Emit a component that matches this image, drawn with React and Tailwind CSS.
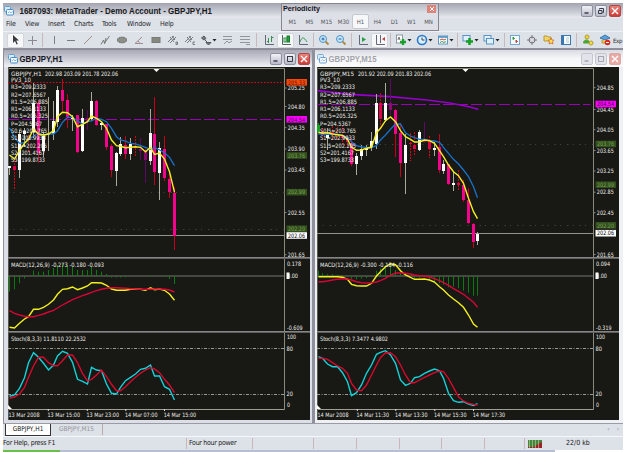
import React from 'react';

const BAR_STEP = 4.845;

// [high, open, close, low, kind]  w = up, p = down, r = thin down, v = violet, g = green
const h1 = {
  symbol: 'GBPJPY,H1',
  quote: '202.98 203.09 201.78 202.06',
  left: 8,
  first: 9.5,
  axis: 284.5,
  quoteWidth: 108,
  candles: [
    [166, 166, 168, 175, 'w'], [160, 166, 169.5, 190, 'r'], [130, 134, 170, 178, 'w'], [128, 130.5, 133.5, 147, 'w'],
    [135, 138, 140, 152, 'r'], [83, 103, 132, 138, 'w'], [100, 103, 153, 163, 'p'], [132, 136, 151, 157, 'w'],
    [97, 133, 135, 151, 'w'], [101, 121, 133.5, 140, 'w'], [86, 90, 122, 127, 'w'], [79, 90, 101, 113, 'p'],
    [94, 100, 117, 128, 'p'], [115, 117, 119, 131, 'w'], [115, 115, 152, 153, 'p'], [109, 118, 151, 152, 'w'],
    [110, 118, 122, 130, 'v'], [92, 101, 119, 121, 'w'], [100, 101, 125, 126, 'p'], [122, 122.5, 125, 129.5, 'w'],
    [124, 124, 147, 150, 'p'], [144, 146, 170, 177, 'p'], [152, 153, 170.5, 186, 'w'], [137, 144, 153.5, 156, 'w'],
    [136, 145, 154, 159, 'p'], [138, 144, 154, 159.5, 'w'], [136, 146, 147.5, 157, 'r'], [138, 149, 151, 160, 'v'],
    [148, 150, 160, 183, 'v'], [109, 133, 160.5, 165, 'w'], [97, 134, 172, 185, 'p'], [142, 148, 173, 200, 'w'],
    [136, 149, 178, 181, 'p'], [173, 179, 192, 198, 'p'], [187, 193, 236, 250, 'p'],
  ],
  fast: [155, 159, 150.7, 143.3, 139.3, 129, 134, 135, 134, 130.7, 116.7, 112.3, 112.7, 116.7, 126.7, 124.3, 121.7, 116, 118.3, 121.7, 128.3, 140, 145.7, 146.3, 147.7, 147.3, 146.7, 147.3, 151.7, 147.3, 154.5, 153, 159, 171.7, 192.3],
  slow: [127.7, 137.3, 143.3, 142.3, 140, 136, 133.3, 135.3, 134, 134, 130.7, 122.3, 117.3, 117.3, 120.7, 124, 121.7, 121, 118.3, 119.3, 121.7, 128.3, 136.7, 140, 141, 143.3, 144, 145.7, 147.3, 149.3, 147.5, 150, 152.7, 157.3, 165.7],
  hist: [291.7, 289.3, 283.3, 278.5, 276, 270.7, 271.7, 271.7, 270, 268, 265, 264, 265, 267, 270, 270, 270, 267, 270, 271.7, 274, 277.5, 277.5, 277.5, 277.3, 276, 276, 276, 276, 275, 276, 276, 276.8, 279, 284],
  macd: [327.3, 328, 323.3, 319, 316.7, 309.3, 309.3, 307.3, 304.3, 300, 294.3, 289.3, 288.7, 287, 289.7, 288, 286, 282.7, 282.7, 283, 285.3, 289, 290.3, 290.3, 290.3, 289.3, 289.3, 289.3, 290.3, 287.7, 289.7, 289, 290.3, 294, 300.3],
  signal: [310.7, 313.3, 315, 316.3, 316.7, 316.7, 315.3, 314, 312, 310.3, 308, 305, 302.3, 299.7, 297.7, 295.7, 294, 292.3, 290.7, 289.3, 288.3, 287.7, 287.7, 288, 288.3, 288.7, 289, 289.3, 289.3, 289.3, 289, 289, 289.3, 290, 292],
  stochK: [396.3, 395, 388.3, 377.7, 362.7, 352.7, 357.3, 363.3, 370, 365, 356, 351.3, 353.3, 362.3, 379.3, 381.3, 384, 367.3, 370, 370.7, 384, 393.3, 394, 387.3, 380.7, 377.3, 374, 369.3, 368.3, 365, 376, 376, 386.7, 389.3, 400],
  stochD: [398.3, 397, 394, 387.3, 377.3, 366, 357.3, 357.3, 362.7, 365.7, 365.7, 360.7, 355, 355, 362.7, 373.3, 381, 379.3, 375, 370, 376.7, 384.3, 390.7, 390.7, 386.7, 381.7, 377.3, 373.3, 370, 367.7, 369, 372.7, 379.3, 385, 392.7],
  price: 235.5,
  pivot: 119.5,
  dotted: [192.5, 229.5],
  ticks: [['205.25', 88], ['204.80', 106.5], ['204.35', 127.7], ['203.90', 149], ['203.45', 170], ['202.55', 212.5], ['201.65', 254.7]],
  tags: [['205.33', 82.3, 'r'], ['204.54', 119.3, 'm'], ['203.76', 155.5, 'g'], ['202.99', 192.2, 'g'], ['202.20', 228.7, 'g'], ['202.06', 235.5, 'w']],
  macdText: 'MACD(12,26,9) -0.273 -0.180 -0.093',
  macdTop: '0.178',
  macdLow: '-0.609',
  stochText: 'Stoch(8,3,3) 11.8110 22.2532',
  stochWidth: 75,
  times: [['13 Mar 2008', 8.5], ['13 Mar 15:00', 47.5], ['13 Mar 23:00', 86.5], ['14 Mar 07:00', 125], ['14 Mar 15:00', 163.7]],
  marker: 156.5,
};

const m15 = {
  symbol: 'GBPJPY,M15',
  quote: '201.92 202.09 201.83 202.06',
  left: 317,
  first: 318,
  axis: 593.5,
  quoteWidth: 112,
  candles: [
    [123, 125, 132, 134, 'g'], [128, 131, 135, 138, 'r'], [128, 135, 138, 150, 'w'], [126, 132, 134, 140, 'r'],
    [127, 134, 135, 140, 'r'], [125, 135, 138, 145, 'r'], [135, 138, 142, 148, 'r'], [138, 143, 164, 166, 'p'],
    [153, 156, 163.5, 174.5, 'w'], [145, 149, 156, 160, 'w'], [145, 147.5, 149.5, 156, 'w'], [131.5, 141, 147, 151, 'w'],
    [94, 103, 143.5, 148.5, 'w'], [93, 103, 119, 128, 'r'], [83, 103, 120, 121.5, 'w'], [79, 103, 109.5, 115, 'v'],
    [109, 110, 133.5, 157, 'p'], [123, 133, 162.5, 177, 'p'], [134, 145, 163, 193.5, 'w'], [133, 143, 144, 161, 'r'],
    [132, 145, 149, 156, 'r'], [130, 132, 149.5, 151, 'w'], [122, 140, 141.5, 143, 'v'], [136, 140, 149, 158, 'r'],
    [141.5, 147.5, 150, 156, 'w'], [134, 147, 169.5, 172.5, 'p'], [159.5, 164, 170.5, 173.5, 'w'], [163.5, 164, 183.5, 185, 'p'],
    [171.5, 183.3, 184.5, 191, 'w'], [170, 183, 185, 190, 'r'], [180, 185, 199.5, 201.5, 'p'], [188, 200, 222.5, 223.5, 'p'],
    [222.5, 224, 241.5, 247.5, 'p'], [231.5, 233.5, 241, 245, 'w'],
  ],
  fast: [132.3, 133.3, 132.7, 134, 134.7, 135.3, 139.3, 147.3, 150.3, 150, 148.3, 147.3, 132.7, 128.3, 120.7, 117, 121.7, 130.7, 136.7, 139.3, 142, 142, 140, 140.7, 143.3, 150.7, 156.7, 165, 171.7, 175.7, 183.3, 198.3, 211.7, 218.7],
  slow: [134, 134, 134.3, 134.3, 134.3, 135.3, 137.3, 141.7, 145.7, 147, 147.3, 147.7, 145.7, 140, 135, 129.3, 124, 124, 132.7, 136, 137.7, 139.3, 139.3, 140.3, 141, 142.3, 147.3, 153.3, 159.3, 164, 170, 176.7, 186.7, 197.7],
  hist: [270.7, 273.3, 274, 274, 274.7, 276, 276.7, 278.7, 279.3, 278.7, 278, 276.7, 270.7, 268.3, 265, 265, 270, 272.7, 274.7, 276, 278.3, 278.3, 277.3, 279.3, 281.7, 283.3, 284.7, 287.3, 286.7, 288.3, 290.7, 292.7, 295.7, 295.7],
  macd: [276.7, 276.7, 276.7, 276.7, 276.7, 277.3, 279.3, 284.3, 285.7, 286, 286, 283.3, 276, 271.7, 266.7, 263.7, 264.7, 270.7, 275, 277.3, 279.3, 279.3, 279, 280, 282, 286.7, 290, 295, 299, 302.7, 307.3, 315, 324, 327.3],
  signal: [281.7, 281.7, 281, 280, 279.3, 278.7, 279, 280, 281.7, 282.7, 283, 282.7, 282, 280.7, 278.3, 275, 273, 273, 273.3, 274, 275, 275.7, 276, 277, 278.7, 280.7, 282.7, 285.3, 288.7, 291.3, 294.3, 298.3, 302.3, 307.3],
  stochK: [356.7, 358.3, 364, 366.7, 366.7, 372.7, 381.7, 395.7, 392.7, 385, 373.3, 365, 354.3, 352.3, 350.7, 355, 363.3, 380, 385.3, 383.3, 377.7, 376.7, 373.3, 371, 369, 370.7, 378.3, 393.3, 400.7, 402.3, 401.7, 404, 405.5, 403.7],
  stochD: [358.3, 358.3, 359.3, 362.7, 366, 368.3, 373.3, 383.3, 390, 390.7, 385, 375, 365, 357.7, 352.7, 352.7, 356.7, 365, 375, 382.7, 382.7, 380, 377.3, 375, 372.7, 371, 371.7, 378.3, 387.7, 396.7, 401, 403.3, 404.5, 404.7],
  price: 233.5,
  pivot: 104.5,
  dotted: [144.5, 225.5],
  ticks: [['204.85', 87.7], ['204.45', 109.5], ['204.05', 129.7], ['203.65', 150.5], ['203.25', 171], ['202.85', 192.2], ['202.45', 212.7], ['201.65', 254.5]],
  tags: [['204.54', 104, 'm'], ['203.76', 144, 'g'], ['202.99', 184.7, 'g'], ['202.20', 225.3, 'g'], ['202.06', 233.2, 'w']],
  macdText: 'MACD(12,26,9) -0.300 -0.184 -0.116',
  macdTop: '0.094',
  macdLow: '-0.319',
  stochText: 'Stoch(8,3,3) 7.3477 4.9802',
  stochWidth: 68,
  times: [['14 Mar 2008', 317.5], ['14 Mar 11:30', 356.5], ['14 Mar 13:30', 395], ['14 Mar 15:30', 434], ['14 Mar 17:30', 472.7]],
  marker: 465.5,
};

const pivots = [
  ['PV3_10', 20], ['R3=209.2333', 35], ['R2=207.6567', 35], ['R1.5=206.885', 37], ['R1=206.1133', 35], ['R0.5=205.325', 37],
  ['P=204.5367', 31], ['S0.5=203.765', 36], ['S1=202.9933', 35], ['S1.5=202.205', 36], ['S2=201.4167', 34], ['S3=199.8733', 34],
];

const candleColors = {
  w: ['#a9a99c', '#ffffff'],
  p: ['#c4001c', '#f5038c'],
  r: ['#d40012', '#e0034a'],
  v: ['#5c0a66', '#8c0a70'],
  g: ['#0a8c14', '#14a01e'],
};

const tagColors = {
  r: ['#f5480a', '#5a1400'],
  m: ['#ff00ff', '#3a003a'],
  g: ['#33501f', '#79a04e'],
  w: ['#ffffff', '#000000'],
};

function Label({ x, y, w, fill = '#eeeee8', children }) {
  return (
    <text x={x} y={y + 2.2} fill={fill} fontSize="6" textLength={w} lengthAdjust="spacingAndGlyphs">
      {children}
    </text>
  );
}

function Chart({ d }) {
  const bx = (i) => Math.floor(d.first + i * BAR_STEP) + 0.5;
  const line = (ys) => ys.map((y, i) => `${bx(i)},${y}`).join(' ');
  const l = d.left;
  const a = d.axis;
  const t = a + 2.5;

  return (
    <svg
      className="block h-[353px] w-[302px] shrink-0 bg-[#181815] font-['DejaVu_Sans_Condensed','DejaVu_Sans',sans-serif]"
      viewBox={`${l} 67 302 353`}
      fill="none"
    >
      {/* Panes and axes */}
      <path d={`M${l} 68.5H${a}V409.5`} stroke="#8a8a78" />
      <path d={`M${l} 409.5H${a}`} stroke="#a0a092" />
      <path d={`M${l + 0.5} 67V420`} stroke="#55554c" />
      <path d={`M${l} 258.5H${l + 302}M${l} 332.5H${l + 302}`} stroke="#5f5f5f" />
      <path d={`M${l} 257.5H${l + 302}M${l} 331.5H${l + 302}`} stroke="#858585" />
      <path d={`M${l} 276H${a}`} stroke="#77776f" />
      <path d={`M${l} 348.5H${a}M${l} 394.5H${a}`} stroke="#9b9b90" strokeDasharray="3 1.5 1 1.5" />
      <path d={`M${d.marker - 3} 69h6l-3 3z`} fill="#fff" />
      <path d={`M${l} 405l4 4h-4z`} fill="#fff" />

      {/* Levels */}
      {d.dotted.map((y) => (
        <path key={y} d={`M${l} ${y}H${a}`} stroke="#4e4e48" strokeWidth="0.8" strokeDasharray="1.5 4 1 6" />
      ))}
      {d.symbol === 'GBPJPY,H1' && <path d={`M${l} 82.5H${a}`} stroke="#d4081e" strokeDasharray="1.6 1.6" />}
      {d.symbol === 'GBPJPY,M15' && (
        <path d="M318 90.7L350 94.3L390 96.7L427 100L450 103L470 107L478.5 109.5" stroke="#9500cc" strokeWidth="1.7" />
      )}
      <path d={`M${l} ${d.pivot}H${a - 3}`} stroke="#9a00b8" strokeDasharray="11 3" />
      <path d={`M${l} ${d.price}H${a}`} stroke="#92928a" />

      {d.candles.map(([hi, top, bottom, lo, kind], i) => (
        <g key={i} shapeRendering="crispEdges">
          <path
            d={`M${bx(i)} ${hi}V${lo}`}
            stroke={candleColors[kind][0]}
            strokeDasharray={kind === 'r' ? '2 1' : undefined}
          />
          <rect x={bx(i) - 1.5} y={top} width="3" height={bottom - top} fill={candleColors[kind][1]} />
        </g>
      ))}
      <polyline points={line(d.slow)} stroke="#1672c8" strokeWidth="1.3" />
      <polyline points={line(d.fast)} stroke="#f4f01c" strokeWidth="1.4" />

      {/* MACD */}
      {d.hist.map((y, i) => (
        <path key={i} d={`M${bx(i)} 276V${y}`} stroke="#0b7a10" />
      ))}
      <polyline points={line(d.macd)} stroke="#f4f01c" strokeWidth="1.4" />
      <polyline points={line(d.signal)} stroke="#d80534" strokeWidth="1.4" />

      {/* Stochastic */}
      <polyline points={line(d.stochK)} stroke="#14d2d8" strokeWidth="1.4" />
      <polyline points={line(d.stochD)} stroke="#d60a2c" strokeWidth="1.4" />

      <Label x={l + 3} y={73.5} w={d.symbol.length * 3.4}>{d.symbol}</Label>
      <Label x={l + 3 + d.quoteWidth - 74} y={73.5} w={73}>{d.quote}</Label>
      {pivots.map(([s, w], i) => (
        <Label key={s} x={l + 3} y={i ? 79.7 + i * 7.3 : 80} w={w}>{s}</Label>
      ))}
      <Label x={l + 3} y={264.8} w={93}>{d.macdText}</Label>
      <Label x={l + 3} y={339} w={d.stochWidth}>{d.stochText}</Label>

      {/* Price scale */}
      {d.ticks.map(([s, y]) => (
        <g key={s}>
          <path d={`M${a} ${y}h2`} stroke="#8a8a78" />
          <Label x={t + 0.8} y={y} w={17}>{s}</Label>
        </g>
      ))}
      {d.tags.map(([s, y, c]) => (
        <g key={s}>
          <rect x={t - 0.5} y={y - 3.3} width="20.5" height="6.6" fill={tagColors[c][0]} />
          <Label x={t + 1} y={y} w={17} fill={tagColors[c][1]}>{s}</Label>
        </g>
      ))}
      <Label x={t} y={263.3} w={14}>{d.macdTop}</Label>
      <rect x={t - 0.5} y="272.5" width="3" height="6.5" fill="#fff" />
      <Label x={t} y={275.5} w={11}>0.00</Label>
      <Label x={t} y={327.5} w={15.5}>{d.macdLow}</Label>
      <Label x={t} y={337.2} w={9}>100</Label>
      <Label x={t - 0.5} y={348.3} w={6.5}>80</Label>
      <Label x={t - 0.5} y={393.7} w={6.5}>20</Label>
      <Label x={t} y={405} w={3}>0</Label>

      {d.times.map(([s, x], i) => (
        <g key={s}>
          {i > 0 && <path d={`M${x + 0.8} 409v2`} stroke="#ddd" />}
          <Label x={x} y={414.8} w={i ? 32.5 : 31}>{s}</Label>
        </g>
      ))}
    </svg>
  );
}

function AppIcon({ faded }) {
  return (
    <svg className={`h-[10px] w-[10px] shrink-0 ${faded ? 'opacity-80' : ''}`} viewBox="0 0 10 10">
      <rect x="0.5" y="0.5" width="6" height="5" rx="1" fill="#d7ecfb" stroke="#5d9bd0" />
      <rect x="2.5" y="3.5" width="7" height="5.5" rx="1" fill="#eef8ff" stroke="#4c8bc6" />
      <path d="M4 7l1.5-1.5L7 7l1.5-1.5" stroke="#67a6dc" strokeWidth="0.8" fill="none" />
    </svg>
  );
}

function WindowButtons({ faded, restore }) {
  const base = 'flex h-[12px] w-[12px] items-center justify-center rounded-[2px] border';
  const gray = faded ? 'border-[#c3c5cf] bg-[#e3e4ea]' : 'border-[#8e909d] bg-linear-to-b from-[#f2f3f8] to-[#b9bcc9]';
  const ink = faded ? '#a2a4b0' : '#3b3d4c';
  return (
    <div className="flex gap-[2px]">
      <span className={`${base} ${gray}`}>
        <svg className="h-[8px] w-[8px] shrink-0" viewBox="0 0 8 8"><path d="M1.5 6h4" stroke={ink} strokeWidth="1.5" /></svg>
      </span>
      <span className={`${base} ${gray}`}>
        <svg className="h-[8px] w-[8px] shrink-0" viewBox="0 0 8 8" fill="none" stroke={ink}>
          {restore ? <path d="M2.5 2.5v-1h4v4h-1M1.5 3.5h3.5v3h-3.5z" /> : <path d="M1 1.5h6M1.5 1.5h5v5h-5z" />}
        </svg>
      </span>
      <span className={`${base} ${faded ? 'border-[#d9a8a8] bg-[#e9a9a3]' : 'border-[#b04848] bg-linear-to-b from-[#e8827a] to-[#cc3a36]'}`}>
        <svg className="h-[8px] w-[8px] shrink-0" viewBox="0 0 8 8"><path d="M1 1l6 6M7 1L1 7" stroke="#fff" strokeWidth="1.4" /></svg>
      </span>
    </div>
  );
}

function ChartWindow({ d, active }) {
  return (
    <div className={`flex w-[308px] shrink-0 flex-col border-t border-[#8b8c98] ${active ? 'bg-[#dcdee8]' : 'bg-[#eef0f4]'}`}>
      <div
        className={`flex h-[17px] items-center justify-between pr-[2px] ${
          active ? 'bg-linear-to-b from-[#a9aab6] via-[#c9cbd5] to-[#f1f2f6] pl-[4px]' : 'bg-linear-to-b from-[#d9dbe2] via-[#f6f7f9] to-[#fafafa] pl-[2px]'
        }`}
      >
        <div className="flex items-center gap-[1px]">
          <AppIcon faded={!active} />
          <svg className="h-[12px] w-[60px] font-['Liberation_Sans',sans-serif]" viewBox="0 0 60 12">
            <text x="0.5" y="9" fontSize="8.5" fontWeight="bold" fill={active ? '#16161c' : '#a3a4aa'} textLength={active ? 43 : 48} lengthAdjust="spacingAndGlyphs">
              {d.symbol}
            </text>
          </svg>
        </div>
        <WindowButtons faded={!active} />
      </div>
      <div className={`flex pb-[3px] ${active ? 'pl-[4px]' : 'pl-[2px]'}`}>
        <Chart d={d} />
      </div>
    </div>
  );
}

const glyphs = {
  cursor: <path d="M4 1v8l2-2 1.5 3.5 1.3-.6L7.3 6.500H10z" fill="#3c3c40" stroke="none" />,
  cross: <path d="M6.5 2v9M2 6.5h9" stroke="#8b8b90" />,
  vline: <path d="M6.5 2v8" />,
  hline: <path d="M2 6.5h8" />,
  diag: <path d="M2 10l8-8" stroke="#a68b86" />,
  trend: <path d="M2 10.5l2.500-4.500 1 3 5-7M5.500 10l1.500-6" stroke="#777" />,
  ellipse: <ellipse cx="6" cy="6" rx="4.5" ry="2.8" fill="#8b9085" stroke="#77797a" />,
  angle: <path d="M9 3L2 9.5h8M5 7l2 2.5" stroke="#a08d8d" />,
  rect: <rect x="2" y="3.5" width="8" height="5" fill="#85897f" stroke="#77797a" />,
  fibD: <path d="M1 8l6-6M3 9l6-6M3 3l4 5M5 2l3 4M9 8h1.5v2.5H9z" stroke="#777a7e" />,
  fibE: <path d="M1 8l6-6M3 9l6-6M3 3l4 5M5 2l3 4M11 8H9v2.5h2" stroke="#777a7e" />,
  arrows: <path d="M1.500 4L4 2l2 2.500-2 1.500zM5 6l3 3M6 8.500h5L8.500 11z" stroke="#55585e" fill="#77797e" />,
  gridA: <path d="M1 2.5h9M1 5.5h9M2 10l3-3 2 2 3-2" stroke="#92959b" />,
  gridB: <path d="M1 2.5h10M1 5.5h10M1 8.5h10M7 10.5h4" stroke="#92959b" />,
  barChart: <g><path d="M2.5 1v9.5H11" stroke="#667" /><path d="M5.5 4v5M4 7.500h1.500M8.500 2v6M8.500 3.500h2" stroke="#3b8d52" /></g>,
  candles: <g><path d="M2.5 1v9.500H11" stroke="#566" /><rect x="4" y="4" width="2" height="4" fill="#fff" stroke="#2b8d40" /><rect x="7" y="2" width="2.5" height="6" fill="#1fa03a" stroke="#197a2c" /></g>,
  lineChart: <g><path d="M2.5 1v9.5H11" stroke="#667" /><path d="M3 8c2-6 4-5 7 0" stroke="#3b9d52" /></g>,
  zoomIn: <g><circle cx="5" cy="5" r="3.5" fill="#c6e6fa" stroke="#4f94c8" /><path d="M3.5 5h3M5 3.500v3" stroke="#2264a4" /><path d="M7.5 7.5l3 3" stroke="#b08a3c" strokeWidth="1.8" /></g>,
  zoomOut: <g><circle cx="5" cy="5" r="3.5" fill="#c6e6fa" stroke="#4f94c8" /><path d="M3.5 5h3" stroke="#2264a4" /><path d="M7.5 7.5l3 3" stroke="#b08a3c" strokeWidth="1.8" /></g>,
  scroll: <g><path d="M2.5 1v9.500H11" stroke="#667" /><path d="M5 3l4 2.5L5 8z" fill="#26a040" stroke="none" /></g>,
  shift: <g><path d="M2.5 1v9.500H11M6.500 1v8" stroke="#667" /><path d="M11 3L8 5l3 2z" fill="#c04040" stroke="none" /></g>,
  indicators: <g><rect x="1.5" y="1" width="6" height="8" fill="#fff" stroke="#8b98a4" /><path d="M3 6l1-3 1 3" stroke="#777" /><path d="M5 8h6M8 5v6" stroke="#16a02a" strokeWidth="2.3" /></g>,
  clock: <g><circle cx="6" cy="6" r="4.5" fill="#d8efff" stroke="#2a78c8" strokeWidth="1.6" /><path d="M6 3.500V6h2.5" stroke="#444" /></g>,
  template: <g><rect x="1.5" y="2" width="9" height="8" fill="#fff" stroke="#5b9ac8" /><path d="M1.5 3h9" stroke="#5b9ac8" strokeWidth="1.8" /><path d="M3 6l2-1 2 1 2-1" stroke="#c04a3a" /><path d="M3 8.5l2-1 2 1 2-1" stroke="#3a9a4a" /></g>,
  newChart: <g><rect x="1" y="1.5" width="7" height="5.5" fill="#dff1ff" stroke="#5a94c4" /><path d="M4 7.5h7M7.5 4v7" stroke="#12a022" strokeWidth="2.5" /></g>,
  profiles: <g fill="#dff1ff" stroke="#5a94c4"><rect x="1" y="1.5" width="7" height="5.5" /><rect x="3.5" y="4.5" width="7" height="5.5" /></g>,
  market: <g><rect x="1.5" y="1.5" width="9" height="9" fill="#f4fbff" stroke="#74a8cc" /><path d="M4 3l1.500 1.500L4 5.500z" fill="#2a9a3a" stroke="#2a9a3a" /><path d="M7 6l1.500 1.500L7 8.500z" fill="#c83a3a" stroke="#c83a3a" /></g>,
  data: <g stroke="#74757a"><circle cx="6" cy="6" r="3" /><path d="M6 1v3.5M6 7.5V11M1 6h3.5M7.5 6H11" /></g>,
  navigator: <g><path d="M1 2h3l1 1h3v4H1z" fill="#f3d766" stroke="#b8963a" /><path d="M8 4l1 2 2 .2-1.5 1.5.5 2.3-2-1-2 1 .5-2.3L5 6.2 7 6z" fill="#ffe04a" stroke="#c85a28" strokeWidth="0.7" /></g>,
  terminal: <g><rect x="1.5" y="1.5" width="9" height="9" fill="#f4fbff" stroke="#3a78b0" /><path d="M3 2v8" stroke="#3a78b0" strokeWidth="2" /><path d="M6 4h3M6 6h3M6 8h3" stroke="#b8cfe0" /></g>,
  order: <g><circle cx="5" cy="3" r="2" fill="#f2d33c" stroke="#b5a030" /><path d="M1.5 9c0-4 6-4 6 0z" fill="#3cae3a" stroke="#5c9c2c" /><circle cx="9" cy="9" r="2" fill="#f5e04a" stroke="#b59a28" /></g>,
  expert: <g><path d="M1 4l5-3 5 3-5 2z" fill="#5c9fd6" stroke="#3a78b0" /><path d="M3 6v3h5V6" fill="#e8c75a" stroke="#b89a3a" /><circle cx="8.5" cy="8.5" r="2.8" fill="#d8281e" stroke="none" /><path d="M7 8.5h3" stroke="#fff" /></g>,
};

function Tool({ name, pressed, caret }) {
  const size = caret ? 'w-[21px]' : 'w-[17px]';
  return (
    <span className={`flex h-[15px] shrink-0 items-center justify-center ${size} ${pressed ? 'rounded-[2px] border border-[#d3d5da] bg-[#f6f7f8]' : ''}`}>
      <svg className="h-[12px] w-[12px] shrink-0" viewBox="0 0 12 12" fill="none" stroke="#7b7c82">{glyphs[name]}</svg>
      {caret && (
        <svg className="h-[4px] w-[5px] shrink-0" viewBox="0 0 5 4"><path d="M0.5 1h4L2.5 3.5z" fill="#222" /></svg>
      )}
    </span>
  );
}

function Sep({ wide }) {
  return (
    <span className={`flex h-[14px] shrink-0 justify-center ${wide ? 'w-[7px]' : 'w-[4.5px]'}`}>
      <span className="w-px bg-[#c9b9bb]" />
    </span>
  );
}

const menu = [
  ['File', 'w-[19px]'], ['View', 'w-[23px]'], ['Insert', 'w-[26px]'], ['Charts', 'w-[28px]'],
  ['Tools', 'w-[25px]'], ['Window', 'w-[33px]'], ['Help', 'w-[20px]'],
];
const periods = ['M1', 'M5', 'M15', 'M30', 'H1', 'H4', 'D1', 'W1', 'MN'];

function Periodicity() {
  return (
    <div className="absolute top-[3px] left-[281px] h-[28px] w-[158px] border border-[#85868f] bg-[#dde0e7]">
      <div className="flex h-[9px] items-center justify-between bg-linear-to-b from-[#b9bac3] to-[#dcdfe6] pr-[2px] pl-[1px]">
        <svg className="h-[9px] w-[50px] font-['Liberation_Sans',sans-serif]" viewBox="0 0 50 9">
          <text x="0" y="6.5" fontSize="7.5" fontWeight="bold" fill="#15151a" textLength="37" lengthAdjust="spacingAndGlyphs">Periodicity</text>
        </svg>
        <span className="flex h-[8px] w-[9px] items-center justify-center bg-[#dd8378]">
          <svg className="h-[6px] w-[6px]" viewBox="0 0 6 6"><path d="M1 1l4 4M5 1L1 5" stroke="#fff" /></svg>
        </span>
      </div>
      <div className="flex h-[17px] items-center pl-[2px]">
        {periods.map((p) => (
          <span
            key={p}
            className={`flex h-[15px] w-[17px] shrink-0 items-center justify-center text-[6px] text-[#55565c] ${
              p === 'H1' ? 'rounded-[2px] border border-[#c6c8cf] bg-[#f7f8f9]' : ''
            }`}
          >
            {p}
          </span>
        ))}
      </div>
    </div>
  );
}

function StatusBar() {
  return (
    <div className="flex h-[14px] items-center border-t border-[#f6f7f9] text-[7px] tracking-[-0.25px] text-[#1c1c20]">
      <span className="w-[183px] whitespace-nowrap">For Help, press F1</span>
      <span className="h-[11px] w-[66px] border-l border-[#c9b6b8] pl-[2px] leading-[11px] tracking-[-0.3px] whitespace-nowrap">Four hour power</span>
      <span className="h-[11px] w-[61px] border-l border-[#c9b6b8]" />
      <span className="h-[11px] w-[43px] border-l border-[#c9b6b8]" />
      <span className="h-[11px] w-[43px] border-l border-[#c9b6b8]" />
      <span className="h-[11px] w-[42px] border-l border-[#c9b6b8]" />
      <span className="h-[11px] w-[43px] border-l border-[#c9b6b8]" />
      <span className="h-[11px] w-[40px] border-l border-[#c9b6b8]" />
      <span className="flex h-[11px] w-[42px] items-center border-l border-[#c9b6b8] pl-[3px]">
        <svg className="h-[8px] w-[14px]" viewBox="0 0 14 8">
          <rect width="14" height="8" fill="#9c2426" />
          <path d="M0 0h14v2l-4 2-4 3H0z" fill="#3f8a38" />
          <path d="M1.5 0v8M4.5 0v8M7.5 0v8M10.5 0v8" stroke="#d8c8a8" strokeWidth="0.6" />
        </svg>
      </span>
      <span className="tracking-normal">22/0 kb</span>
    </div>
  );
}

export default function App() {
  return (
    <div className="relative h-[452px] w-[625px] overflow-hidden bg-white pt-[3px] pl-[3px] font-['DejaVu_Sans_Condensed','DejaVu_Sans',sans-serif]">
      <div className="flex w-[620px] flex-col bg-[#dde1e8]">
        {/* Title bar */}
        <div className="flex h-[15px] items-center justify-between bg-linear-to-b from-[#a3a4b0] via-[#c3c5cf] to-[#e9ebf0] pr-[2px] pl-[1px]">
          <div className="flex items-center gap-[5px]">
            <AppIcon />
            <svg className="h-[13px] w-[200px] overflow-visible font-['Liberation_Sans',sans-serif]" viewBox="0 0 200 13">
              <text x="0.5" y="10" fontSize="8.5" fontWeight="bold" fill="#191a20" textLength="192.5" lengthAdjust="spacingAndGlyphs">
                1687093: MetaTrader - Demo Account - GBPJPY,H1
              </text>
            </svg>
          </div>
          <WindowButtons restore />
        </div>

        <div className="flex h-[13px] items-center pl-[3px] text-[7px] tracking-[-0.2px] text-[#26272c]">
          {menu.map(([label, width]) => (
            <span key={label} className={`${width} whitespace-nowrap`}>{label}</span>
          ))}
        </div>

        {/* Toolbar */}
        <div className="flex h-[17px] items-center overflow-hidden border-t border-[#eef0f3] pl-[3.5px]">
          <Tool name="cursor" pressed />
          <Tool name="cross" />
          <Sep />
          <Tool name="vline" />
          <Tool name="hline" />
          <Tool name="diag" />
          <Tool name="trend" />
          <Tool name="ellipse" />
          <Tool name="angle" />
          <Tool name="rect" />
          <Tool name="fibD" />
          <Tool name="fibE" />
          <Tool name="arrows" caret />
          <Tool name="gridA" />
          <Tool name="gridB" />
          <Sep wide />
          <Tool name="barChart" />
          <Tool name="candles" pressed />
          <Tool name="lineChart" />
          <Sep />
          <Tool name="zoomIn" />
          <Tool name="zoomOut" />
          <Sep />
          <Tool name="scroll" />
          <Tool name="shift" pressed />
          <Sep />
          <Tool name="indicators" caret />
          <Tool name="clock" caret />
          <Tool name="template" caret />
          <Sep />
          <Tool name="newChart" caret />
          <Tool name="profiles" caret />
          <Sep />
          <Tool name="market" />
          <Tool name="data" />
          <Tool name="navigator" />
          <Tool name="terminal" />
          <Sep />
          <Tool name="order" />
          <Tool name="expert" />
          <span className="text-[6px] tracking-[-0.3px] text-[#26272c]">Exp</span>
        </div>

        {/* Chart windows */}
        <div className="flex overflow-hidden border-t border-[#8f909b] bg-[#8f909b] pl-[1px]">
          <div className="flex shrink-0 gap-[3px]">
            <ChartWindow d={h1} active />
            <ChartWindow d={m15} />
          </div>
        </div>

        {/* Sheet tabs */}
        <div className="flex h-[13px] items-start border-t border-[#9a9ba5] pl-[2px] text-[6.5px]">
          <span className="flex h-[12px] w-[46px] items-center justify-center border-x border-b border-[#333] bg-white text-[#111]">GBPJPY,H1</span>
          <span className="flex h-[11px] w-[52px] items-center justify-center border-r border-[#b9a9ab] text-[#94959b]">GBPJPY,M15</span>
          <span className="ml-auto flex h-[11px] items-center gap-[7px] pr-[4px] text-[#8a8b92]">
            <span>‹</span>
            <span>›</span>
          </span>
        </div>

        <StatusBar />
        <div className="flex h-[3px]">
          <span className="w-[57px] bg-[#6cc04a]" />
          <span className="w-[495px] bg-[#b7bfd6]" />
          <span className="grow bg-white" />
        </div>
      </div>
      <Periodicity />
    </div>
  );
}
